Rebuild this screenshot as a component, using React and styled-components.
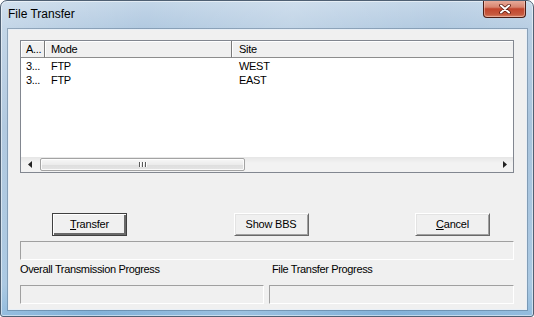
import React from 'react';
import styled, { createGlobalStyle } from 'styled-components';

const GlobalStyle = createGlobalStyle`
  html, body {
    margin: 0;
    padding: 0;
    background: #ffffff;
  }
  body {
    font-family: "Liberation Sans", Arial, sans-serif;
  }
`;

const Window = styled.div`
  width: 534px;
  height: 317px;
  box-sizing: border-box;
  display: flex;
  flex-direction: column;
  padding: 0 6px 6px 7px;
  border: 1px solid #4f6073;
  border-radius: 7px 7px 3px 3px;
  background:
    linear-gradient(100deg, rgba(255, 255, 255, 0.25) 0%, rgba(255, 255, 255, 0) 25%,
      rgba(255, 255, 255, 0.2) 50%, rgba(255, 255, 255, 0) 75%, rgba(255, 255, 255, 0.15) 100%),
    linear-gradient(180deg, #c3d6e8 0%, #b1c9e0 9%, #9ebcd8 40%, #9cbfdd 90%, #7fb0d8 100%);
  box-shadow: inset 0 0 0 1px rgba(255, 255, 255, 0.5);
  overflow: hidden;
`;

const TitleBar = styled.div`
  height: 28px;
  display: flex;
  align-items: flex-start;
  justify-content: space-between;
`;

const Title = styled.div`
  font-size: 12px;
  line-height: 28px;
  color: #000;
  margin-top: -1px;
`;

const CloseButton = styled.div`
  width: 43px;
  height: 18px;
  margin-top: -1px;
  margin-right: 1px;
  box-sizing: border-box;
  border: 1px solid #4b1d15;
  border-top: none;
  border-radius: 0 0 4px 4px;
  background: linear-gradient(180deg, #eab0a0 0%, #d88570 42%, #c2452d 52%, #c65a3f 85%, #d9876b 100%);
  box-shadow: inset 0 0 0 1px rgba(255, 220, 210, 0.45);
  display: flex;
  align-items: center;
  justify-content: center;
`;

const Client = styled.div`
  flex: 1;
  box-sizing: border-box;
  display: flex;
  flex-direction: column;
  padding: 10px 12px 0 11px;
  background: #f0f0f0;
  border: 1px solid #e8eff6;
  box-shadow: 0 0 0 1px rgba(70, 95, 120, 0.4);
`;

const ListBox = styled.div`
  height: 133px;
  box-sizing: border-box;
  border: 1px solid #828790;
  background: #ffffff;
  display: flex;
  flex-direction: column;
`;

const Row = styled.div`
  display: grid;
  grid-template-columns: 24px 187px 1fr;
  height: ${(p) => (p.$header ? '17px' : '14px')};
  font-size: 11px;
  letter-spacing: -0.3px;
  color: #000;
`;

const HeadCell = styled.div`
  box-sizing: border-box;
  padding-left: ${(p) => p.$pad}px;
  line-height: 16px;
  background: #f0f0f0;
  border-bottom: 1px solid #8d8d8d;
  border-right: ${(p) => (p.$last ? 'none' : '1px solid #7a7a7a')};
  box-shadow: inset 1px 1px 0 #ffffff;
  white-space: nowrap;
  overflow: hidden;
`;

const Cell = styled.div`
  padding-left: ${(p) => p.$pad}px;
  line-height: 14px;
  white-space: nowrap;
  overflow: hidden;
`;

const Body = styled.div`
  flex: 1;
  padding-top: 1px;
`;

const HScroll = styled.div`
  height: 15px;
  display: flex;
  align-items: stretch;
  background: linear-gradient(180deg, #e6e6e6 0%, #f2f2f2 40%, #f2f2f2 100%);
`;

const ArrowBtn = styled.div`
  width: 17px;
  display: flex;
  align-items: center;
  justify-content: center;
`;

const Track = styled.div`
  flex: 1;
  padding: 1px 2px;
  display: flex;
`;

const Thumb = styled.div`
  width: 205px;
  box-sizing: border-box;
  border: 1px solid #a3a3a3;
  border-radius: 2px;
  background: linear-gradient(180deg, #f7f7f7 0%, #ececec 50%, #dedede 51%, #e4e4e4 100%);
  box-shadow: inset 0 0 0 1px rgba(255, 255, 255, 0.8);
  display: flex;
  align-items: center;
  justify-content: center;
  gap: 2px;
`;

const Grip = styled.span`
  width: 1px;
  height: 5px;
  background: #5a5a5a;
  box-shadow: 1px 0 0 #ffffff;
`;

const ButtonRow = styled.div`
  margin-top: 40px;
  padding: 0 24px 0 32px;
  display: flex;
  justify-content: space-between;
`;

const Button = styled.button`
  width: 75px;
  height: 23px;
  box-sizing: border-box;
  padding: 0 0 2px;
  font-family: "Liberation Sans", Arial, sans-serif;
  font-size: 11px;
  letter-spacing: -0.2px;
  color: #000;
  background: #f0f0f0;
  border: 1px solid;
  border-color: ${(p) => (p.$default ? '#404040' : '#ffffff #696969 #696969 #ffffff')};
  box-shadow: ${(p) =>
    p.$default
      ? 'inset 1px 1px 0 #ffffff, inset -2px -2px 0 #696969, inset -1px -1px 0 #a0a0a0'
      : 'inset 1px 1px 0 #e3e3e3, inset -1px -1px 0 #a0a0a0'};
  u {
    text-decoration: underline;
  }
`;

const Sunken = styled.div`
  height: 19px;
  box-sizing: border-box;
  border: 1px solid;
  border-color: #a0a0a0 #ffffff #ffffff #a0a0a0;
  background: #f0f0f0;
`;

const StatusBox = styled(Sunken)`
  margin-top: 5px;
`;

const Pair = styled.div`
  display: grid;
  grid-template-columns: 244px 1fr;
  column-gap: 5px;
`;

const Label = styled.div`
  height: 25px;
  box-sizing: border-box;
  padding: 3px 0 0 ${(p) => p.$pad || 0}px;
  font-size: 11px;
  line-height: 13px;
  letter-spacing: -0.35px;
  color: #000;
`;

const rows = [
  { a: '3...', mode: 'FTP', site: 'WEST' },
  { a: '3...', mode: 'FTP', site: 'EAST' },
];

export default function App() {
  return (
    <>
      <GlobalStyle />
      <Window>
        <TitleBar>
          <Title>File Transfer</Title>
          <CloseButton>
            <svg width="12" height="10" viewBox="0 0 12 10">
              <path d="M2 1.5 L10 8.5 M10 1.5 L2 8.5" stroke="#5a1a10" strokeWidth="3.6" strokeLinecap="round" />
              <path d="M2 1.5 L10 8.5 M10 1.5 L2 8.5" stroke="#ffffff" strokeWidth="2" strokeLinecap="round" />
            </svg>
          </CloseButton>
        </TitleBar>
        <Client>
          <ListBox>
            <Row $header>
              <HeadCell $pad={5}>A...</HeadCell>
              <HeadCell $pad={6}>Mode</HeadCell>
              <HeadCell $pad={7} $last>Site</HeadCell>
            </Row>
            <Body>
              {rows.map((r, i) => (
                <Row key={i}>
                  <Cell $pad={5}>{r.a}</Cell>
                  <Cell $pad={6}>{r.mode}</Cell>
                  <Cell $pad={7}>{r.site}</Cell>
                </Row>
              ))}
            </Body>
            <HScroll>
              <ArrowBtn>
                <svg width="4" height="7" viewBox="0 0 4 7">
                  <path d="M4 0 L0 3.5 L4 7 Z" fill="#222" />
                </svg>
              </ArrowBtn>
              <Track>
                <Thumb>
                  <Grip />
                  <Grip />
                  <Grip />
                </Thumb>
              </Track>
              <ArrowBtn>
                <svg width="4" height="7" viewBox="0 0 4 7">
                  <path d="M0 0 L4 3.5 L0 7 Z" fill="#222" />
                </svg>
              </ArrowBtn>
            </HScroll>
          </ListBox>
          <ButtonRow>
            <Button $default>
              <u>T</u>ransfer
            </Button>
            <Button>Show BBS</Button>
            <Button>
              <u>C</u>ancel
            </Button>
          </ButtonRow>
          <StatusBox />
          <Pair>
            <Label>Overall Transmission Progress</Label>
            <Label $pad={3}>File Transfer Progress</Label>
          </Pair>
          <Pair>
            <Sunken />
            <Sunken />
          </Pair>
        </Client>
      </Window>
    </>
  );
}
